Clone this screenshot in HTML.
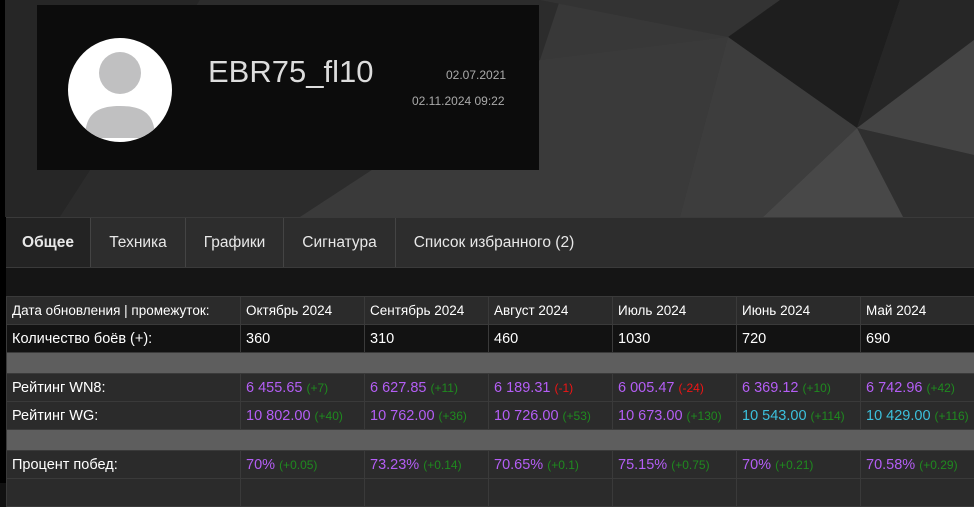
<!DOCTYPE html>
<html><head><meta charset="utf-8"><style>
*{margin:0;padding:0;box-sizing:border-box}
body{width:974px;height:483px;overflow:hidden;background:#111;font-family:"Liberation Sans","DejaVu Sans",sans-serif;position:relative}
.bg{position:absolute;left:0;top:0}
.card{position:absolute;left:37px;top:5px;width:502px;height:165px;background:#0c0c0c}
.av{position:absolute;left:68px;top:38px;width:104px;height:104px;border-radius:50%;background:#fff;overflow:hidden}
.name{position:absolute;left:208px;top:54px;font-size:31px;color:#ddd}
.d1{position:absolute;left:446px;top:68px;font-size:12px;color:#aaa}
.d2{position:absolute;left:412px;top:94px;font-size:12px;color:#aaa}
.tabs{position:absolute;left:6px;top:217px;width:968px;height:50px;background:#2d2d2d;border-top:1px solid #3a3a3a;display:flex}
.tab{height:49px;line-height:49px;text-align:center;color:#e8e8e8;font-size:15.5px;border-right:1px solid #444}
.tab.a{background:#232323;font-weight:bold}
.band{position:absolute;left:6px;top:267px;width:968px;height:29px;background:#151515;border-top:1px solid #3a3a3a}
table{position:absolute;left:6px;top:296px;border-collapse:collapse;font-size:14.5px;color:#fff;table-layout:fixed;width:978px}
td{height:28px;border:1px solid #3a3a3a;padding:0 0 0 5px;white-space:nowrap;vertical-align:middle;overflow:hidden}
tr.h td{background:#2b2b2b;font-size:13.5px}
tr.k td{background:#121212}
tr.s td{background:#5e5e5e;height:21px}
tr.r td{background:#2b2b2b}
.p{color:#b45ef5}.c{color:#3cc0dc}.g{color:#1f8a1f;font-size:12px}.rd{color:#f01515;font-size:12px}
</style></head><body>
<svg class="bg" width="974" height="217">
<rect width="974" height="217" fill="#383838"/>
<polygon points="0,0 200,0 60,217 0,217" fill="#262626"/>
<polygon points="200,0 560,0 540,60 300,217 60,217" fill="#2c2c2c"/>
<polygon points="540,60 728,37 680,217 300,217" fill="#3a3a3a"/>
<polygon points="540,0 780,0 728,37" fill="#333"/>
<polygon points="728,37 780,0 900,0 857,128" fill="#1e1e1e"/>
<polygon points="900,0 974,0 974,40 857,128" fill="#262626"/>
<polygon points="857,128 974,40 974,155" fill="#444"/>
<polygon points="857,128 974,155 974,217 903,217" fill="#2f2f2f"/>
<polygon points="857,128 903,217 763,217" fill="#484848"/>
<polygon points="728,37 857,128 763,217 680,217" fill="#3d3d3d"/>
<rect width="5" height="217" fill="#000"/>
</svg>
<div class="card"></div>
<div class="av"><svg width="104" height="104"><circle cx="52" cy="35" r="21" fill="#c0c0c1"/><path d="M17 100 C17 75 30 68 52 68 C74 68 87 75 87 100 Z" fill="#c0c0c1"/></svg></div>
<div class="name">EBR75_fl10</div>
<div class="d1">02.07.2021</div>
<div class="d2">02.11.2024 09:22</div>
<div style="position:absolute;left:0;top:217px;width:6px;height:266px;background:#000"></div>
<div class="tabs"><div class="tab a" style="width:85px">Общее</div><div class="tab" style="width:95px">Техника</div><div class="tab" style="width:98px">Графики</div><div class="tab" style="width:112px">Сигнатура</div><div class="tab" style="width:196px;border:none">Список избранного (2)</div></div>
<div class="band"></div>
<table>
<colgroup><col style="width:234px"><col style="width:124px"><col style="width:124px"><col style="width:124px"><col style="width:124px"><col style="width:124px"><col style="width:124px"></colgroup>
<tr class="h"><td>Дата обновления | промежуток:</td><td>Октябрь 2024</td><td>Сентябрь 2024</td><td>Август 2024</td><td>Июль 2024</td><td>Июнь 2024</td><td>Май 2024</td></tr>
<tr class="k"><td>Количество боёв (+):</td><td>360</td><td>310</td><td>460</td><td>1030</td><td>720</td><td>690</td></tr>
<tr class="s"><td colspan="7"></td></tr>
<tr class="r"><td>Рейтинг WN8:</td><td><span class="p">6 455.65</span> <span class="g">(+7)</span></td><td><span class="p">6 627.85</span> <span class="g">(+11)</span></td><td><span class="p">6 189.31</span> <span class="rd">(-1)</span></td><td><span class="p">6 005.47</span> <span class="rd">(-24)</span></td><td><span class="p">6 369.12</span> <span class="g">(+10)</span></td><td><span class="p">6 742.96</span> <span class="g">(+42)</span></td></tr>
<tr class="r"><td>Рейтинг WG:</td><td><span class="p">10 802.00</span> <span class="g">(+40)</span></td><td><span class="p">10 762.00</span> <span class="g">(+36)</span></td><td><span class="p">10 726.00</span> <span class="g">(+53)</span></td><td><span class="p">10 673.00</span> <span class="g">(+130)</span></td><td><span class="c">10 543.00</span> <span class="g">(+114)</span></td><td><span class="c">10 429.00</span> <span class="g">(+116)</span></td></tr>
<tr class="s"><td colspan="7"></td></tr>
<tr class="r"><td>Процент побед:</td><td><span class="p">70%</span> <span class="g">(+0.05)</span></td><td><span class="p">73.23%</span> <span class="g">(+0.14)</span></td><td><span class="p">70.65%</span> <span class="g">(+0.1)</span></td><td><span class="p">75.15%</span> <span class="g">(+0.75)</span></td><td><span class="p">70%</span> <span class="g">(+0.21)</span></td><td><span class="p">70.58%</span> <span class="g">(+0.29)</span></td></tr>
<tr class="r"><td></td><td></td><td></td><td></td><td></td><td></td><td></td></tr>
</table>
</body></html>
